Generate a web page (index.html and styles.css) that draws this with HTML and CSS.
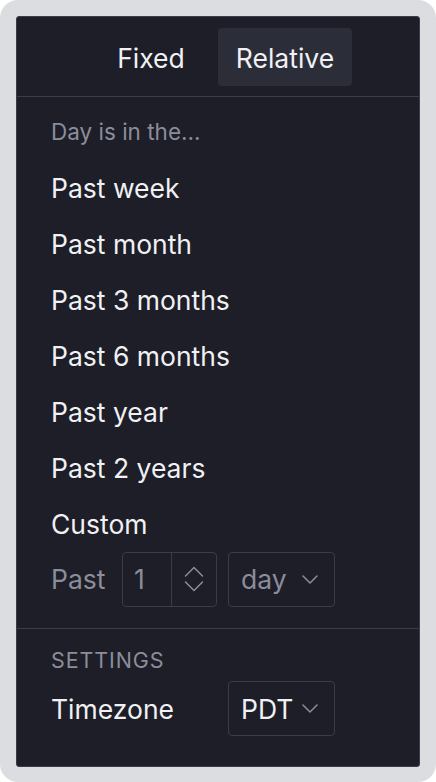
FILE: index.html
```html
<!DOCTYPE html>
<html>
<head>
<meta charset="utf-8">
<link rel="stylesheet" href="styles.css">
</head>
<body>
<div class="frame">
  <div class="panel">
    <div class="tabs">
      <button class="tab">Fixed</button>
      <button class="tab tab-active">Relative</button>
    </div>
    <div class="section">
      <div class="label">Day is in the...</div>
      <div class="option">Past week</div>
      <div class="option">Past month</div>
      <div class="option">Past 3 months</div>
      <div class="option">Past 6 months</div>
      <div class="option">Past year</div>
      <div class="option">Past 2 years</div>
      <div class="option">Custom</div>
      <div class="custom-row">
        <span class="muted">Past</span>
        <div class="number">
          <span class="number-value">1</span>
          <span class="stepper">
            <svg width="20" height="28" viewBox="0 0 20 28" fill="none" stroke="#8b8d9a" stroke-width="1.5" stroke-linecap="round" stroke-linejoin="round"><path d="M1.5 11 L10 2.5 L18.5 11"/><path d="M1.5 17 L10 25.5 L18.5 17"/></svg>
          </span>
        </div>
        <div class="select select-muted">
          <span>day</span>
          <svg width="16" height="9" viewBox="0 0 16 9" fill="none" stroke="#8b8d9a" stroke-width="1.5" stroke-linecap="round" stroke-linejoin="round"><path d="M1 1 L8 8 L15 1"/></svg>
        </div>
      </div>
    </div>
    <div class="settings">
      <div class="caps">SETTINGS</div>
      <div class="setting-row">
        <span class="setting-name">Timezone</span>
        <div class="select">
          <span>PDT</span>
          <svg width="16" height="9" viewBox="0 0 16 9" fill="none" stroke="#8b8d9a" stroke-width="1.5" stroke-linecap="round" stroke-linejoin="round"><path d="M1 1 L8 8 L15 1"/></svg>
        </div>
      </div>
    </div>
  </div>
</div>
</body>
</html>
```
FILE: styles.css
```css
html, body {
  margin: 0;
  padding: 0;
  background: #ffffff;
}
body {
  font-family: Inter, "Noto Sans", sans-serif;
  color: #f1f1f4;
}
.frame {
  width: 436px;
  height: 782px;
  box-sizing: border-box;
  background: #dcdde0;
  border-radius: 18px;
  padding: 16px 16px 15px 16px;
}
.panel {
  height: 100%;
  box-sizing: border-box;
  background: #1d1e27;
  border: 1px solid #3a3b4c;
  border-radius: 3px;
  display: flex;
  flex-direction: column;
}
.tabs {
  display: flex;
  justify-content: center;
  padding: 11px 0 10px;
  border-bottom: 1px solid #3a3b4c;
}
.tab {
  width: 134px;
  height: 58px;
  border: 0;
  border-radius: 4px;
  background: transparent;
  color: #f1f1f4;
  font-family: inherit;
  font-size: 26.5px;
  padding: 2px 0 0;
  cursor: pointer;
}
.tab-active {
  background: #2b2d39;
}
.section {
  padding: 6px 0 21px 34px;
  border-bottom: 1px solid #3a3b4c;
}
.label {
  height: 56px;
  display: flex;
  align-items: center;
  font-size: 22.5px;
  color: #8b8d9a;
}
.option {
  height: 56px;
  display: flex;
  align-items: center;
  font-size: 26.5px;
  padding-top: 2px;
  box-sizing: border-box;
}
.custom-row {
  height: 56px;
  display: flex;
  align-items: center;
  font-size: 26.5px;
}
.muted {
  color: #8b8d9a;
  width: 71px;
}
.number {
  width: 95px;
  height: 55px;
  box-sizing: border-box;
  border: 1px solid #3a3b4c;
  border-radius: 4px;
  display: flex;
  color: #8b8d9a;
}
.number-value {
  width: 49px;
  box-sizing: border-box;
  padding-left: 11px;
  display: flex;
  align-items: center;
  border-right: 1px solid #3a3b4c;
}
.stepper {
  flex: 1;
  display: flex;
  align-items: center;
  justify-content: center;
}
.select {
  width: 107px;
  height: 55px;
  box-sizing: border-box;
  border: 1px solid #3a3b4c;
  border-radius: 4px;
  display: flex;
  align-items: center;
  justify-content: space-between;
  padding: 0 16px 0 12px;
  font-size: 26.5px;
  margin-left: 11px;
}
.select-muted {
  color: #8b8d9a;
}
.settings {
  flex: 1;
  padding: 19px 0 0 34px;
}
.caps {
  font-size: 21.5px;
  line-height: 24px;
  color: #8b8d9a;
  letter-spacing: 0.9px;
}
.setting-row {
  display: flex;
  align-items: center;
  margin-top: 9px;
  font-size: 26.5px;
}
.setting-name {
  width: 166px;
}
```
